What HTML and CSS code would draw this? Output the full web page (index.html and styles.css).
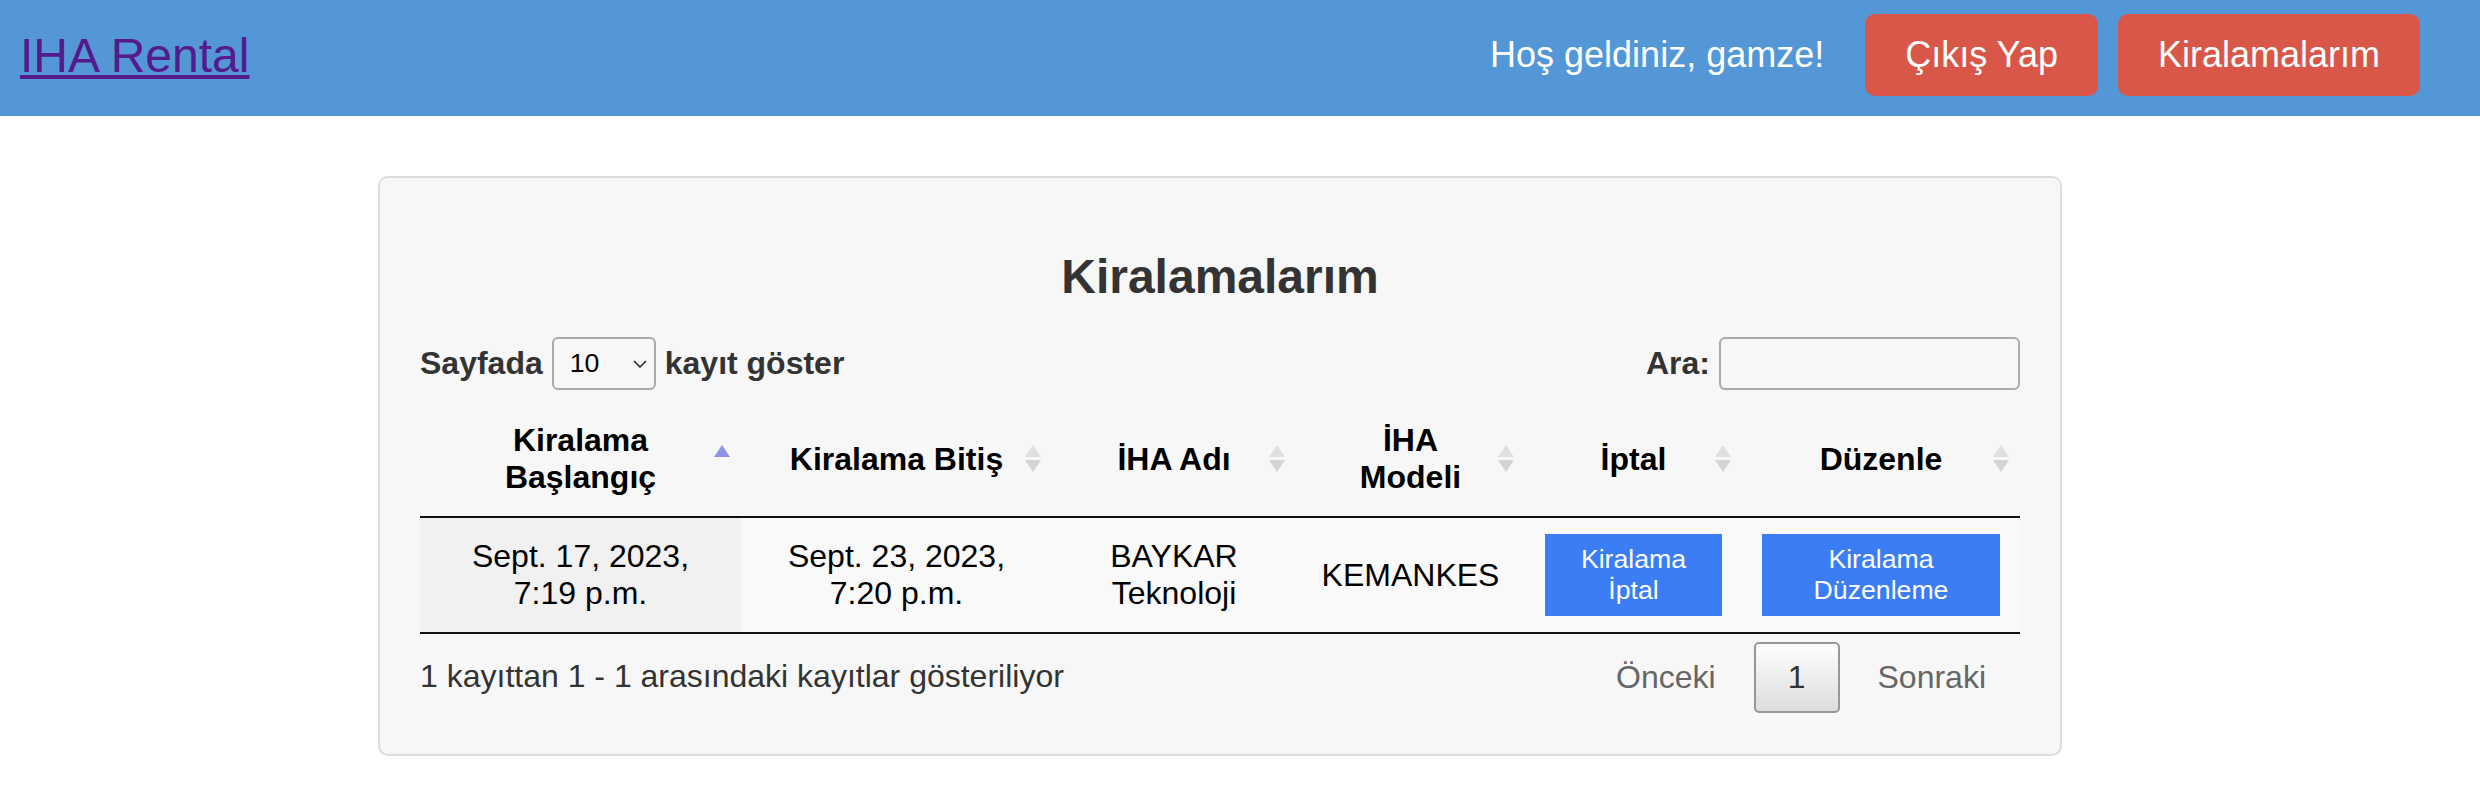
FILE: index.html
```html
<!DOCTYPE html>
<html lang="tr">
<head>
<meta charset="utf-8">
<title>IHA Rental - Kiralamalarım</title>
<link rel="stylesheet" href="styles.css">
</head>
<body>
<header class="topbar">
  <a class="brand" href="#">IHA Rental</a>
  <div class="user">
    <span class="welcome">Hoş geldiniz, gamze!</span>
    <a class="btn-red" href="#">Çıkış Yap</a>
    <a class="btn-red" href="#">Kiralamalarım</a>
  </div>
</header>
<main class="page">
  <section class="card">
    <h2 class="title">Kiralamalarım</h2>
    <div class="controls">
      <label class="length">
        <span>Sayfada</span>
        <span class="select"><span>10</span><svg class="chev" width="14" height="8" viewBox="0 0 14 8"><polyline points="1,1 7,7 13,1" fill="none" stroke="#222" stroke-width="1.5"/></svg></span>
        <span>kayıt göster</span>
      </label>
      <label class="filter">
        <span>Ara:</span>
        <input class="search" type="text">
      </label>
    </div>
    <table class="dt">
      <colgroup>
        <col class="c1"><col class="c2"><col class="c3"><col class="c4"><col class="c5"><col class="c6">
      </colgroup>
      <thead>
        <tr>
          <th class="asc">Kiralama Başlangıç</th>
          <th class="both">Kiralama Bitiş</th>
          <th class="both">İHA Adı</th>
          <th class="both">İHA Modeli</th>
          <th class="both">İptal</th>
          <th class="both">Düzenle</th>
        </tr>
      </thead>
      <tbody>
        <tr>
          <td class="sorted">Sept. 17, 2023, 7:19 p.m.</td>
          <td>Sept. 23, 2023, 7:20 p.m.</td>
          <td>BAYKAR Teknoloji</td>
          <td>KEMANKES</td>
          <td><button class="btn-blue" type="button">Kiralama İptal</button></td>
          <td><button class="btn-blue" type="button">Kiralama Düzenleme</button></td>
        </tr>
      </tbody>
    </table>
    <div class="foot">
      <div class="info">1 kayıttan 1 - 1 arasındaki kayıtlar gösteriliyor</div>
      <div class="paginate">
        <span class="pbtn disabled">Önceki</span>
        <span class="pbtn current">1</span>
        <span class="pbtn disabled">Sonraki</span>
      </div>
    </div>
  </section>
</main>
</body>
</html>
```

FILE: styles.css
```css
* { box-sizing: border-box; }

body {
  margin: 0;
  background: #ffffff;
  font-family: "Liberation Sans", Arial, Helvetica, sans-serif;
  font-size: 32px;
  color: #333333;
}

/* Header */
.topbar {
  display: flex;
  align-items: center;
  justify-content: space-between;
  background: #5397d6;
  padding: 14px 60px 20px 20px;
}

.brand {
  font-size: 48px;
  color: #551a8b;
  text-decoration: underline;
}

.user {
  display: flex;
  align-items: center;
}

.welcome {
  font-size: 36px;
  color: #ffffff;
  margin-right: 41px;
}

.btn-red {
  display: flex;
  align-items: center;
  height: 82px;
  padding: 0 40px;
  background: #d85748;
  color: #ffffff;
  font-size: 36px;
  text-decoration: none;
  border-radius: 10px;
  margin-left: 20px;
}

.btn-red:first-of-type { margin-left: 0; }

/* Page */
.page {
  padding: 60px 40px 0 0;
}

.card {
  width: 1684px;
  margin: 0 auto;
  background: #f7f7f7;
  border: 2px solid #dddddd;
  border-radius: 10px;
  padding: 40px 40px 41px;
}

.title {
  margin: 31px 0 33px;
  text-align: center;
  font-size: 48px;
  font-weight: bold;
  color: #333333;
}

.controls {
  display: flex;
  justify-content: space-between;
  align-items: center;
  height: 53px;
  margin-bottom: 12px;
  font-weight: bold;
  color: #333333;
}

.length, .filter {
  display: flex;
  align-items: center;
  gap: 9px;
}

.select {
  display: flex;
  align-items: center;
  width: 104px;
  height: 53px;
  padding: 0 7px 0 16px;
  border: 2px solid #aaaaaa;
  border-radius: 6px;
  font-size: 26.67px;
  font-weight: normal;
  color: #000000;
}

.chev { margin-left: auto; }

.search {
  width: 301px;
  height: 53px;
  border: 2px solid #aaaaaa;
  border-radius: 6px;
  background: transparent;
  font: inherit;
  font-weight: normal;
  padding: 0 10px;
}

/* Table */
.dt {
  width: 1600px;
  table-layout: fixed;
  border-collapse: separate;
  border-spacing: 0;
  color: #000000;
}

.c1 { width: 321px; }
.c2 { width: 311px; }
.c3 { width: 244px; }
.c4 { width: 229px; }
.c5 { width: 217px; }
.c6 { width: 278px; }

.dt th {
  position: relative;
  padding: 20px 36px;
  text-align: center;
  vertical-align: middle;
  font-weight: bold;
  border-bottom: 2px solid #111111;
}

.dt th::before,
.dt th::after {
  content: "";
  position: absolute;
  right: 11px;
  width: 0;
  height: 0;
  border-left: 8px solid transparent;
  border-right: 8px solid transparent;
}

.dt th.both::before {
  top: calc(50% - 14px);
  border-bottom: 12px solid #e0e0e0;
}

.dt th.both::after {
  top: calc(50% + 1px);
  border-top: 12px solid #d4d4d4;
}

.dt th.asc::before {
  top: calc(50% - 14px);
  border-bottom: 12px solid #8e94e3;
}

.dt th.asc::after { display: none; }

.dt td {
  padding: 16px 20px;
  text-align: center;
  vertical-align: middle;
  background: #f9f9f9;
  border-bottom: 2px solid #111111;
}

.dt td.sorted { background: #f1f1f1; }

.btn-blue {
  display: block;
  width: 100%;
  height: 82px;
  padding: 0 12px;
  border: none;
  border-radius: 0;
  background: #3a7df5;
  color: #ffffff;
  font-family: inherit;
  font-size: 26.67px;
  line-height: 1.15;
}

/* Footer */
.foot {
  display: flex;
  justify-content: space-between;
  align-items: flex-start;
}

.info {
  padding-top: 24px;
  color: #333333;
}

.paginate {
  display: flex;
  padding-top: 8px;
}

.pbtn {
  display: block;
  padding: 16px 32px;
  line-height: 35px;
  margin-left: 4px;
  border: 2px solid transparent;
  border-radius: 5px;
  color: #333333;
}

.pbtn.disabled { color: #666666; }

.pbtn.current {
  border-color: #979797;
  background: linear-gradient(to bottom, #ffffff 0%, #dcdcdc 100%);
}
```
